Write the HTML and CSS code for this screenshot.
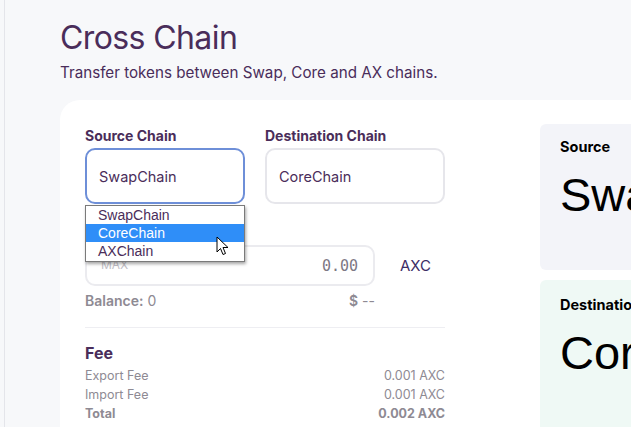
FILE: index.html
```html
<!DOCTYPE html>
<html>
<head>
<meta charset="utf-8">
<link rel="stylesheet" href="styles.css">
</head>
<body>
<div class="page">
  <h1 class="title">Cross Chain</h1>
  <p class="subtitle">Transfer tokens between Swap, Core and AX chains.</p>
  <div class="card">
    <div class="form">
      <div class="chains">
        <div class="field field-src">
          <div class="label">Source Chain</div>
          <div class="select focused">SwapChain</div>
          <div class="dropdown">
            <div class="opt">SwapChain</div>
            <div class="opt sel">CoreChain</div>
            <div class="opt">AXChain</div>
            <svg class="cursor" width="14" height="20" viewBox="0 0 14 20"><path d="M1 1 L1 16 L4.5 12.5 L7 18.5 L9.5 17.5 L7 11.5 L12 11.5 Z" fill="#fff" stroke="#000" stroke-width="1" stroke-linejoin="round"/></svg>
          </div>
        </div>
        <div class="field field-dst">
          <div class="label">Destination Chain</div>
          <div class="select">CoreChain</div>
        </div>
      </div>
      <div class="amount-row">
        <div class="amount">
          <span class="max">MAX</span>
          <span class="value">0.00</span>
        </div>
        <span class="token">AXC</span>
      </div>
      <div class="balance">
        <span><b>Balance:</b> 0</span>
        <span><b>$</b> --</span>
      </div>
      <div class="fee">
        <div class="fee-title">Fee</div>
        <div class="fee-row"><span>Export Fee</span><span>0.001 AXC</span></div>
        <div class="fee-row"><span>Import Fee</span><span>0.001 AXC</span></div>
        <div class="fee-row total"><span>Total</span><span>0.002 AXC</span></div>
      </div>
    </div>
    <div class="side">
      <div class="panel panel-src">
        <div class="panel-label">Source</div>
        <div class="panel-value">SwapChain</div>
      </div>
      <div class="panel panel-dst">
        <div class="panel-label">Destination</div>
        <div class="panel-value">CoreChain</div>
      </div>
    </div>
  </div>
</div>
</body>
</html>
```
FILE: styles.css
```css
html, body {
  margin: 0;
  padding: 0;
  background: #f7f8fa;
  overflow: hidden;
  height: 427px;
}
body {
  font-family: Inter, "Noto Sans", sans-serif;
  color: #4a2d5a;
}
.page {
  margin-left: 4px;
  border-left: 1px solid #e4e5ea;
  padding: 18px 0 0 55px;
  height: 427px;
  box-sizing: border-box;
  overflow: hidden;
}
.title {
  margin: 0;
  font-size: 32px;
  font-weight: 400;
  line-height: 40px;
  color: #4a2d5a;
  letter-spacing: -0.6px;
}
.subtitle {
  margin: 6px 0 0;
  font-size: 15.2px;
  line-height: 18px;
  color: #4a2d5a;
}
.card {
  margin-top: 18px;
  background: #fff;
  border-radius: 20px 0 0 0;
  display: flex;
  gap: 95px;
  padding: 24px 0 0 25px;
  height: 327px;
  box-sizing: border-box;
}
.form {
  width: 360px;
  flex: none;
  padding-top: 4px;
}
.chains {
  display: flex;
  gap: 20px;
}
.field { position: relative; }
.field-src { width: 160px; }
.field-dst { width: 180px; }
.label {
  font-weight: 700;
  font-size: 14px;
  line-height: 16px;
  margin-bottom: 4px;
}
.select {
  height: 56px;
  box-sizing: border-box;
  border: 2px solid #e6e6eb;
  border-radius: 10px;
  display: flex;
  align-items: center;
  padding-left: 12px;
  font-size: 14.5px;
}
.select.focused { border-color: #6e8fd8; }
.dropdown {
  position: absolute;
  left: 0;
  top: 77px;
  width: 160px;
  background: #fff;
  border: 1px solid #7a7a7a;
  box-shadow: 1px 2px 3px rgba(0,0,0,0.35);
  font-family: "Liberation Sans", Arial, sans-serif;
  font-size: 14px;
  z-index: 5;
  box-sizing: border-box;
  padding: 0 0 1px;
}
.opt {
  height: 18px;
  line-height: 18px;
  padding-left: 12px;
  color: #4a2d5a;
}
.opt.sel { background: #2f8ef8; color: #fff; }
.cursor {
  position: absolute;
  left: 130px;
  top: 30px;
}
.amount-row {
  margin-top: 41px;
  display: flex;
  align-items: center;
  gap: 25px;
}
.amount {
  width: 290px;
  height: 41px;
  box-sizing: border-box;
  border: 2px solid #ebebef;
  border-radius: 10px;
  display: flex;
  justify-content: space-between;
  align-items: center;
  padding: 0 15px 0 14px;
}
.max {
  font-size: 12px;
  color: #c2bfc7;
  margin-top: -2px;
}
.value {
  font-family: "DejaVu Sans Mono", monospace;
  font-size: 15px;
  color: #7d7884;
}
.token {
  font-size: 15px;
  color: #3d2e66;
}
.balance {
  width: 360px;
  display: flex;
  justify-content: space-between;
  font-size: 14px;
  color: #8e8a93;
  margin-top: 6px;
  line-height: 18px;
  padding-bottom: 17px;
  border-bottom: 1px solid #eeeef2;
  box-sizing: border-box;
}
.balance span:last-child { margin-right: 70px; }
.balance b { font-weight: 600; }
.fee { padding-top: 15px; }
.fee-title {
  font-weight: 700;
  font-size: 16px;
  line-height: 20px;
  margin-bottom: 3px;
}
.fee-row {
  display: flex;
  justify-content: space-between;
  font-size: 12.5px;
  line-height: 19px;
  color: #8e8a93;
}
.fee-row.total { font-weight: 700; }
.side {
  flex: 1;
  display: flex;
  flex-direction: column;
  gap: 10px;
  min-width: 0;
}
.panel {
  flex: none;
  border-radius: 6px 0 0 6px;
  padding: 14px 0 0 20px;
  overflow: hidden;
  white-space: nowrap;
  color: #000;
  box-sizing: border-box;
}
.panel-src { background: #f3f4f9; height: 146px; }
.panel-dst { background: #eff9f5; height: 147px; border-radius: 6px 0 0 0; padding-top: 16px; }
.panel-label {
  font-weight: 700;
  font-size: 14.5px;
  line-height: 18px;
}
.panel-value {
  font-family: "Liberation Sans", Arial, sans-serif;
  font-size: 47px;
  line-height: 56px;
  margin-top: 11px;
}
```
